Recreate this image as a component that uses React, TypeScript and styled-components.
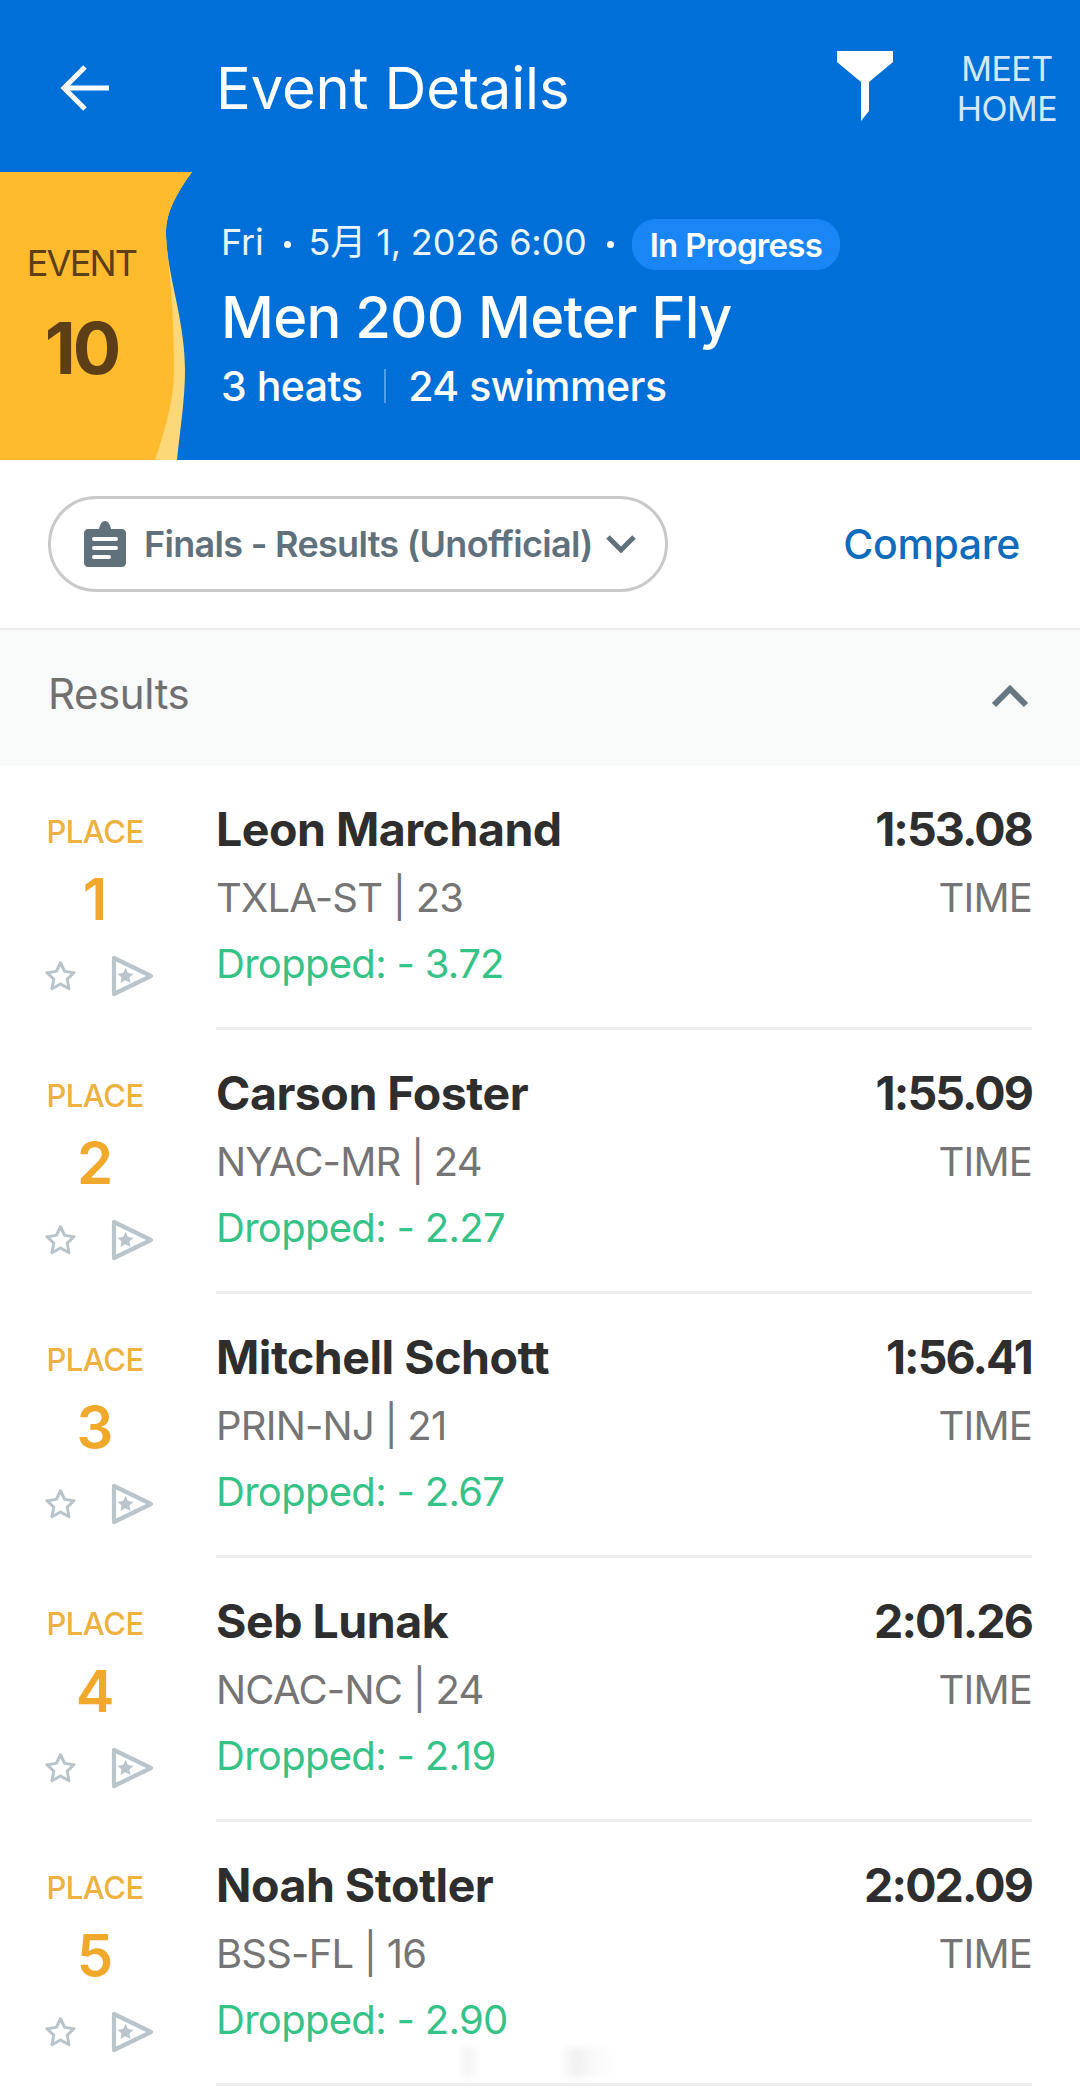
import { FC } from 'react';
import styled, { createGlobalStyle } from 'styled-components';

const GlobalStyle = createGlobalStyle`
  html, body {
    margin: 0;
    padding: 0;
    background: #ffffff;
  }

  body {
    font-family: Inter, "Noto Sans CJK SC", "Liberation Sans", sans-serif;
  }
`;

const Page = styled.div`
  position: relative;
  width: 1080px;
  height: 2088px;
  overflow: hidden;
  display: flex;
  flex-flow: column nowrap;
`;

const TopBar = styled.header`
  height: 172px;
  flex: none;
  box-sizing: border-box;
  padding-top: 4px;
  background: #0070d8;
  display: flex;
  align-items: center;
  color: #ffffff;
`;

const BackButton = styled.div`
  width: 216px;
  flex: none;
  display: flex;
  padding-left: 60px;
  box-sizing: border-box;
`;

const PageTitle = styled.h1`
  all: unset;
  flex: 1;
  font-size: 58px;
  font-weight: 400;
  letter-spacing: -0.2px;
  line-height: 64px;
`;

const FunnelIcon = styled.svg`
  width: 56px;
  height: 70px;
  flex: none;
  margin-top: -4px;
`;

const MeetHome = styled.div`
  width: 110px;
  margin: 1px 18px 0 59px;
  flex: none;
  font-size: 34px;
  line-height: 40px;
  letter-spacing: -0.5px;
  text-align: center;
  color: #d5e8fa;
`;

const Banner = styled.section`
  height: 288px;
  flex: none;
  background: #0070d8;
  display: flex;
  color: #ffffff;
`;

const EventBadge = styled.div`
  position: relative;
  width: 221px;
  flex: none;
  box-sizing: border-box;
  padding: 69px 58px 0 0;
  display: flex;
  flex-flow: column nowrap;
  align-items: center;
  color: #5c3f17;
`;

const BadgeWave = styled.svg`
  position: absolute;
  top: 0;
  left: 0;
`;

const EventLabel = styled.span`
  position: relative;
  font-size: 36px;
  line-height: 44px;
  letter-spacing: -1.8px;
`;

const EventNumber = styled.span`
  position: relative;
  margin-top: 25px;
  font-size: 72px;
  line-height: 76px;
  font-weight: 700;
  letter-spacing: -3px;
`;

const BannerInfo = styled.div`
  display: flex;
  flex-flow: column nowrap;
  padding-top: 47px;
`;

const DateRow = styled.div`
  display: flex;
  align-items: center;
  height: 51px;
  font-size: 36px;
  letter-spacing: -0.15px;
  color: #eaf4fd;
`;

const DateText = styled.span`
  line-height: 44px;
  margin-bottom: 5px;
`;

const Dot = styled.span`
  width: 7px;
  height: 7px;
  border-radius: 50%;
  background: #ffffff;
  margin: 0 18px 0 20px;
`;

const StatusPill = styled.span`
  height: 51px;
  box-sizing: border-box;
  padding: 0 18px;
  border-radius: 24px;
  background: #1a86f5;
  display: flex;
  align-items: center;
  font-size: 33px;
  font-weight: 600;
  letter-spacing: -0.7px;
  color: #ffffff;
`;

const EventName = styled.h2`
  all: unset;
  margin-top: 14px;
  font-size: 58px;
  line-height: 66px;
  font-weight: 500;
  letter-spacing: -0.8px;
`;

const EventStats = styled.div`
  margin-top: 13px;
  display: flex;
  align-items: center;
  font-size: 41px;
  line-height: 46px;
  font-weight: 500;
  letter-spacing: -0.5px;
`;

const StatDivider = styled.span`
  width: 2px;
  height: 34px;
  margin: 0 22px;
  background: #4d9fe6;
`;

const FilterRow = styled.div`
  height: 170px;
  flex: none;
  box-sizing: border-box;
  padding: 36px 60px 0 48px;
  border-bottom: 2px solid #eeeeee;
  display: flex;
  justify-content: space-between;
`;

const FilterPill = styled.div`
  width: 620px;
  height: 96px;
  box-sizing: border-box;
  border: 3px solid #c9c9c9;
  border-radius: 48px;
  display: flex;
  align-items: center;
  padding-left: 33px;
  font-size: 36px;
  font-weight: 600;
  letter-spacing: -0.7px;
  color: #60717b;
  white-space: nowrap;
`;

const ClipboardIcon = styled.svg`
  width: 42px;
  height: 46px;
  margin-right: 18px;
  flex: none;
`;

const PillChevron = styled.svg`
  width: 32px;
  height: 20px;
  margin-left: 12px;
  flex: none;
`;

const CompareLink = styled.span`
  margin-top: 24px;
  font-size: 41px;
  line-height: 48px;
  font-weight: 500;
  letter-spacing: -0.4px;
  color: #0f6cbd;
`;

const SectionHeader = styled.div`
  height: 136px;
  flex: none;
  box-sizing: border-box;
  padding: 0 51px 10px 48px;
  background: #f8f9f9;
  display: flex;
  align-items: center;
  justify-content: space-between;
  font-size: 42px;
  font-weight: 400;
  letter-spacing: -0.4px;
  color: #707070;
`;

const SectionChevron = styled.svg`
  width: 38px;
  height: 24px;
  margin-top: 6px;
`;

const ResultList = styled.div`
  display: flex;
  flex-flow: column nowrap;
`;

const ResultRow = styled.article`
  height: 264px;
  flex: none;
  display: flex;
`;

const PlaceColumn = styled.div`
  width: 216px;
  flex: none;
  box-sizing: border-box;
  padding-top: 47px;
  display: flex;
  flex-flow: column nowrap;
`;

const PlaceLabel = styled.span`
  width: 190px;
  text-align: center;
  font-size: 31px;
  line-height: 38px;
  font-weight: 500;
  letter-spacing: -0.5px;
  color: #ecb13f;
`;

const PlaceNumber = styled.span`
  width: 190px;
  margin-top: 13px;
  text-align: center;
  font-size: 58px;
  line-height: 70px;
  font-weight: 600;
  color: #f0a92a;
`;

const PlaceIcons = styled.div`
  display: flex;
  align-items: center;
  gap: 34px;
  padding-left: 44px;
  margin-top: 21px;
`;

const RowBody = styled.div`
  width: 816px;
  flex: none;
  box-sizing: border-box;
  border-bottom: 3px solid #eeeeee;
  padding-top: 35px;
  display: flex;
  justify-content: space-between;
`;

const SwimmerColumn = styled.div`
  display: flex;
  flex-flow: column nowrap;
`;

const TimeColumn = styled.div`
  display: flex;
  flex-flow: column nowrap;
  align-items: flex-end;
`;

const StrongText = styled.span`
  font-size: 46.5px;
  line-height: 56px;
  font-weight: 700;
  letter-spacing: -0.5px;
  color: #2e2e2e;
`;

const TimeValue = styled(StrongText)`
  letter-spacing: -1.9px;
`;

const MutedText = styled.span`
  margin-top: 17px;
  font-size: 40px;
  line-height: 48px;
  letter-spacing: -0.8px;
  color: #757575;
`;

const DroppedText = styled.span`
  margin-top: 18px;
  font-size: 40px;
  line-height: 48px;
  letter-spacing: -0.7px;
  color: #35c388;
`;

const NavSmudge = styled.div`
  position: absolute;
  top: 2047px;
  left: 462px;
  width: 158px;
  height: 30px;
  background: linear-gradient(90deg, #f4f4f4 0 3%, #ffffff 12% 62%, #f0f0f0 72%, #fafafa 85%, #ffffff);
  filter: blur(3px);
`;

const StarOutline: FC = () => (
  <svg width="33" height="33" viewBox="0 0 31 31">
    <path
      d="M15.5 2.500l3.900 8.200 8.900 1.200-6.500 6.100 1.700 9-8-4.500-8 4.500 1.700-9-6.500-6.100 8.900-1.200z"
      fill="none"
      stroke="#b9c4cb"
      strokeWidth="2.8"
      strokeLinejoin="round"
    />
  </svg>
);

const FlagIcon: FC = () => (
  <svg width="43" height="42" viewBox="0 0 43 42">
    <path
      d="M3 3l37 18L3 39z"
      fill="none"
      stroke="#b9c4cb"
      strokeWidth="4.200"
      strokeLinejoin="round"
    />
    <path
      d="M14 12.500l2.400 5 5.600.700-4.100 3.800 1.100 5.500-5-2.800-5 2.800 1.100-5.500-4.100-3.800 5.600-.700z"
      transform="translate(0.500 0.500)"
      fill="#b9c4cb"
    />
  </svg>
);

interface Result {
  place: number;
  name: string;
  team: string;
  time: string;
  dropped: string;
}

const RESULTS: Result[] = [
  { place: 1, name: 'Leon Marchand', team: 'TXLA-ST | 23', time: '1:53.08', dropped: '3.72' },
  { place: 2, name: 'Carson Foster', team: 'NYAC-MR | 24', time: '1:55.09', dropped: '2.27' },
  { place: 3, name: 'Mitchell Schott', team: 'PRIN-NJ | 21', time: '1:56.41', dropped: '2.67' },
  { place: 4, name: 'Seb Lunak', team: 'NCAC-NC | 24', time: '2:01.26', dropped: '2.19' },
  { place: 5, name: 'Noah Stotler', team: 'BSS-FL | 16', time: '2:02.09', dropped: '2.90' },
];

export default function App() {
  return (
    <Page>
      <GlobalStyle />

      <TopBar>
        <BackButton>
          <svg width="52" height="48" viewBox="0 0 52 48">
            <path
              d="M49 24H5M25 3L4 24l21 21"
              fill="none"
              stroke="#ffffff"
              strokeWidth="5"
            />
          </svg>
        </BackButton>
        <PageTitle>Event Details</PageTitle>
        <FunnelIcon viewBox="0 0 56 70">
          <path d="M0 0H56V11L32 31V60L24 70V31L0 11Z" fill="#ffffff" />
        </FunnelIcon>
        <MeetHome>
          MEET
          <br />
          HOME
        </MeetHome>
      </TopBar>

      <Banner>
        <EventBadge>
          <BadgeWave width="200" height="288" viewBox="0 0 200 288">
            <path
              d="M0 0H192C175 23 165 43 166 63C167 103 185 148 185 198C185 228 180 258 177 288H0Z"
              fill="#fdd878"
            />
            <path
              d="M0 0H192C175 23 165 43 166 63C167 88 174 118 174 198C174 228 165 258 155 288H0Z"
              fill="#ffbb2e"
            />
          </BadgeWave>
          <EventLabel>EVENT</EventLabel>
          <EventNumber>10</EventNumber>
        </EventBadge>
        <BannerInfo>
          <DateRow>
            <DateText>Fri</DateText>
            <Dot />
            <DateText>5月 1, 2026 6:00</DateText>
            <Dot />
            <StatusPill>In Progress</StatusPill>
          </DateRow>
          <EventName>Men 200 Meter Fly</EventName>
          <EventStats>
            3 heats
            <StatDivider />
            24 swimmers
          </EventStats>
        </BannerInfo>
      </Banner>

      <FilterRow>
        <FilterPill>
          <ClipboardIcon viewBox="0 0 42 46">
            <path
              d="M4 8h11c1-5 3-8 6-8s5 3 6 8h11c2 0 4 2 4 4v30c0 2-2 4-4 4H4c-2 0-4-2-4-4V12c0-2 2-4 4-4z"
              fill="#60717b"
            />
            <path
              d="M10 18h22M10 27h22M10 36h15"
              stroke="#ffffff"
              strokeWidth="4"
              strokeLinecap="round"
            />
          </ClipboardIcon>
          Finals - Results (Unofficial)
          <PillChevron viewBox="0 0 32 20">
            <path d="M3 3l13 13L29 3" fill="none" stroke="#60717b" strokeWidth="5" />
          </PillChevron>
        </FilterPill>
        <CompareLink>Compare</CompareLink>
      </FilterRow>

      <SectionHeader>
        Results
        <SectionChevron viewBox="0 0 38 24">
          <path d="M3 21L19 5l16 16" fill="none" stroke="#67777f" strokeWidth="6" />
        </SectionChevron>
      </SectionHeader>

      <ResultList>
        {RESULTS.map((result) => (
          <ResultRow key={result.place}>
            <PlaceColumn>
              <PlaceLabel>PLACE</PlaceLabel>
              <PlaceNumber>{result.place}</PlaceNumber>
              <PlaceIcons>
                <StarOutline />
                <FlagIcon />
              </PlaceIcons>
            </PlaceColumn>
            <RowBody>
              <SwimmerColumn>
                <StrongText>{result.name}</StrongText>
                <MutedText>{result.team}</MutedText>
                <DroppedText>Dropped: - {result.dropped}</DroppedText>
              </SwimmerColumn>
              <TimeColumn>
                <TimeValue>{result.time}</TimeValue>
                <MutedText>TIME</MutedText>
              </TimeColumn>
            </RowBody>
          </ResultRow>
        ))}
      </ResultList>

      <NavSmudge />
    </Page>
  );
}
